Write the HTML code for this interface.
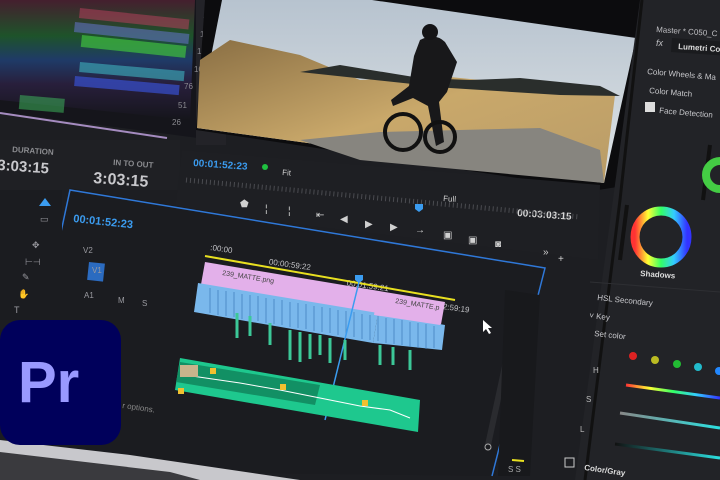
<!DOCTYPE html>
<html><head><meta charset="utf-8"><style>
html,body{margin:0;padding:0;width:720px;height:480px;overflow:hidden;background:#1c1d21}
svg{display:block}
text{font-family:"Liberation Sans",sans-serif}
</style></head><body>
<svg width="720" height="480" viewBox="0 0 720 480" xmlns="http://www.w3.org/2000/svg">
<defs>
<linearGradient id="sky" x1="0" y1="0" x2="0" y2="1"><stop offset="0" stop-color="#b7c3cf"/><stop offset="1" stop-color="#dfe4e6"/></linearGradient>
<linearGradient id="hill" x1="0" y1="0" x2="1" y2="1"><stop offset="0" stop-color="#8a6f44"/><stop offset="0.5" stop-color="#c9a86a"/><stop offset="1" stop-color="#b99c68"/></linearGradient>
<linearGradient id="scope" x1="0" y1="0" x2="0" y2="1"><stop offset="0" stop-color="#4a2030"/><stop offset="0.3" stop-color="#1f5a2c"/><stop offset="0.5" stop-color="#203f70"/><stop offset="0.7" stop-color="#2a203f"/><stop offset="1" stop-color="#15151b"/></linearGradient>
<linearGradient id="hue" x1="0" y1="0" x2="1" y2="0"><stop offset="0" stop-color="#f33"/><stop offset=".25" stop-color="#ff3"/><stop offset=".5" stop-color="#3f6"/><stop offset=".75" stop-color="#3cf"/><stop offset="1" stop-color="#33f"/></linearGradient>
<linearGradient id="sat" x1="0" y1="0" x2="1" y2="0"><stop offset="0" stop-color="#888"/><stop offset="1" stop-color="#2ce0e0"/></linearGradient>
<linearGradient id="lum" x1="0" y1="0" x2="1" y2="0"><stop offset="0" stop-color="#111"/><stop offset="1" stop-color="#2ce0e0"/></linearGradient>
</defs>
<rect width="720" height="480" fill="#1d1e22"/>
<!-- scopes -->
<polygon points="0,0 200,0 198,138 0,112" fill="#15151b"/>
<polygon points="0,0 195,0 190,120 0,100" fill="url(#scope)" opacity="0.9"/>
<rect x="80" y="8" width="110" height="10" fill="#c04060" opacity=".5" transform="rotate(6 80 8)"/>
<rect x="75" y="22" width="115" height="10" fill="#6070c0" opacity=".6" transform="rotate(6 75 22)"/>
<rect x="82" y="35" width="105" height="12" fill="#3fbf3f" opacity=".7" transform="rotate(6 82 35)"/>
<rect x="80" y="62" width="105" height="10" fill="#3aa0b0" opacity=".7" transform="rotate(5 80 62)"/>
<rect x="75" y="76" width="105" height="10" fill="#3850d0" opacity=".7" transform="rotate(5 75 76)"/>
<rect x="20" y="95" width="45" height="14" fill="#3fbf5f" opacity=".5" transform="rotate(5 20 95)"/>
<line x1="0" y1="113" x2="167" y2="138" stroke="#a58cc0" stroke-width="2"/>
<rect x="196" y="0" width="30" height="145" fill="#232328"/>
<g fill="#8a8a90" font-size="8"><text x="203" y="22">179</text><text x="200" y="37">153</text><text x="197" y="54">128</text><text x="194" y="72">102</text><text x="184" y="89">76</text><text x="178" y="108">51</text><text x="172" y="125">26</text></g>
<!-- duration -->
<rect x="0" y="140" width="180" height="50" fill="#1f2024"/>
<text x="12" y="152" fill="#8b8c90" font-size="8" font-weight="bold" transform="rotate(4 12 152)">DURATION</text>
<text x="-3" y="170" fill="#c8c8cc" font-size="15" font-weight="bold" transform="rotate(4 0 170)">3:03:15</text>
<text x="113" y="165" fill="#8b8c90" font-size="8" font-weight="bold" transform="rotate(4 113 165)">IN TO OUT</text>
<text x="93" y="183" fill="#c8c8cc" font-size="16" font-weight="bold" transform="rotate(4 93 183)">3:03:15</text>
<!-- video -->
<polygon points="205,0 660,0 645,40 630,185 598,190 196,130" fill="#0c0c0e"/>
<polygon points="222,0 372,0 636,38 604,183 197,128" fill="url(#sky)"/>
<polygon points="197,128 200,60 230,40 300,55 360,80 440,76 520,84 615,95 604,183" fill="url(#hill)"/>
<polygon points="300,72 340,65 420,78 470,80 520,78 600,86 620,96 560,95 450,88" fill="#2a2e2c"/>
<polygon points="300,140 380,132 540,128 600,150 604,183 360,160" fill="#87857f"/>
<path d="M420,40 q15,-8 25,2 l12,20 l-10,30 l-8,10 l5,40 l-8,4 l-8,-40 l-15,-8 l-20,8 l-2,-6 l18,-14 l5,-30z" fill="#18181a"/>
<circle cx="403" cy="132" r="18" fill="none" stroke="#111" stroke-width="4"/>
<circle cx="440" cy="137" r="15" fill="none" stroke="#111" stroke-width="4"/>
<circle cx="430" cy="32" r="8" fill="#141416"/>
<!-- transport -->
<polygon points="182,150 600,185 598,260 175,210" fill="#1e1f23"/>
<text x="193" y="166" fill="#3b9cf0" font-size="10" font-weight="bold" transform="rotate(4 193 166)">00:01:52:23</text>
<circle cx="265" cy="167" r="3" fill="#1fc040"/>
<text x="282" y="175" fill="#d0d0d0" font-size="8" transform="rotate(4 282 175)">Fit</text>
<text x="443" y="201" fill="#d0d0d0" font-size="8" transform="rotate(4 443 201)">Full</text>
<text x="517" y="216" fill="#d8d8d8" font-size="10" font-weight="bold" transform="rotate(4 517 216)">00:03:03:15</text>
<line x1="186" y1="180" x2="580" y2="217" stroke="#4a4b50" stroke-width="5" stroke-dasharray="1 3"/>
<path d="M415,204 h8 v5 l-4,3 l-4,-3z" fill="#3b9cf0"/>
<g fill="#d0d0d0" font-size="10"><text x="240" y="207">⬟</text><text x="265" y="212">¦</text><text x="288" y="214">¦</text><text x="316" y="218">⇤</text><text x="340" y="222">◀</text><text x="365" y="227">▶</text><text x="390" y="230">▶</text><text x="415" y="233">→</text><text x="443" y="238">▣</text><text x="468" y="243">▣</text><text x="495" y="247">◙</text><text x="543" y="255">»</text><text x="558" y="262">+</text></g>
<!-- timeline panel -->
<polygon points="70,188 545,268 495,476 0,470 0,330 40,320" fill="#1b1c20"/>
<polyline points="40,330 70,190 545,268 492,476" fill="none" stroke="#2f78d8" stroke-width="1.5"/>
<text x="73" y="222" fill="#3b9cf0" font-size="11" font-weight="bold" transform="rotate(6 73 222)">00:01:52:23</text>
<g fill="#c0c0c4" font-size="8" transform="rotate(8 210 250)">
<text x="210" y="250">:00:00</text><text x="270" y="256">00:00:59:22</text><text x="350" y="266">00:01:59:21</text><text x="433" y="276">00:02:59:19</text></g>
<line x1="205" y1="256" x2="455" y2="300" stroke="#e8e020" stroke-width="2"/>
<!-- tool column -->
<rect x="0" y="190" width="62" height="130" fill="#1b1c20"/>
<path d="M45,198 l6,8 h-12z" fill="#3b9cf0"/>
<g fill="#9a9aa0" font-size="9"><text x="40" y="222">▭</text><text x="32" y="248">✥</text><text x="25" y="265">⊢⊣</text><text x="22" y="280">✎</text><text x="18" y="297">✋</text><text x="14" y="313">T</text></g>
<rect x="89" y="262" width="16" height="18" fill="#2b6bc0" transform="rotate(6 89 262)"/>
<g fill="#9a9aa0" font-size="8"><text x="83" y="253">V2</text><text x="92" y="273">V1</text><text x="84" y="298">A1</text><text x="118" y="303">M</text><text x="142" y="306">S</text></g>
<!-- clips -->
<polygon points="205,262 445,302 440,330 200,290" fill="#e3b0ea"/>
<polygon points="198,283 378,313 373,343 194,312" fill="#7ab8ec"/>
<polygon points="378,313 445,325 442,350 373,343" fill="#7ab8ec"/>
<g stroke="#3e7ab8" stroke-width="1" opacity=".7">
<path d="M210,288 v25 M218,290 v25 M226,291 v25 M234,292 v25 M242,294 v25 M250,295 v25 M258,296 v25 M266,298 v25 M274,299 v25 M282,300 v25 M290,302 v25 M298,303 v25 M306,304 v25 M314,306 v25 M322,307 v25 M330,308 v25 M338,310 v25 M346,311 v25 M354,312 v25 M362,314 v25 M370,315 v25 M378,316 v25 M386,318 v25 M394,319 v25 M402,320 v25 M410,322 v25 M418,323 v25 M426,324 v25 M434,326 v22"/></g>
<polygon points="378,292 442,302 440,325 374,315" fill="#e3b0ea"/>
<text x="222" y="275" fill="#444" font-size="7" transform="rotate(9 222 275)">239_MATTE.png</text>
<text x="395" y="303" fill="#444" font-size="7" transform="rotate(9 395 303)">239_MATTE.p</text>
<line x1="360" y1="278" x2="325" y2="420" stroke="#3b9cf0" stroke-width="1.5"/>
<path d="M355,275 h8 v5 l-4,3 l-4,-3z" fill="#3b9cf0"/>
<g stroke="#3cc898" stroke-width="3"><path d="M237,313 v25 M250,316 v20 M270,323 v22 M290,330 v30 M300,332 v30 M310,334 v25 M320,335 v20 M330,338 v25 M345,340 v20 M380,345 v20 M393,347 v18 M410,350 v20"/></g>
<polygon points="180,358 420,400 418,432 175,390" fill="#1ec88e"/>
<polygon points="180,362 320,385 315,405 176,382" fill="#129064"/>
<polyline points="185,375 240,383 280,390 320,398 360,406 390,410 410,418" fill="none" stroke="#fff" stroke-width="1"/>
<rect x="180" y="365" width="18" height="12" fill="#c8b48c"/>
<g fill="#f0c030"><rect x="210" y="368" width="6" height="6"/><rect x="280" y="384" width="6" height="6"/><rect x="362" y="400" width="6" height="6"/><rect x="178" y="388" width="6" height="6"/></g>
<text x="122" y="408" fill="#888" font-size="8" transform="rotate(8 122 408)">r options.</text>
<!-- scrollbars -->
<line x1="515" y1="320" x2="488" y2="445" stroke="#2a2b2f" stroke-width="6"/>
<circle cx="516" cy="320" r="3" fill="none" stroke="#aaa"/><circle cx="508" cy="356" r="3" fill="none" stroke="#aaa"/><circle cx="488" cy="447" r="3" fill="none" stroke="#aaa"/>
<path d="M483,320 v12 l3,-3 l3,5 l2,-1 l-3,-5 h4z" fill="#fff"/>
<!-- meter column -->
<polygon points="505,290 540,295 530,476 498,476" fill="#18191c"/>
<line x1="512" y1="460" x2="524" y2="461" stroke="#e8e020" stroke-width="2"/>
<text x="508" y="472" fill="#aaa" font-size="8">S S</text>
<!-- right panel -->
<polygon points="640,0 720,0 720,480 575,480" fill="#222327"/>
<polyline points="642,0 620,200 585,480" stroke="#111" stroke-width="3" fill="none"/>
<text x="656" y="32" fill="#c0c0c4" font-size="8" transform="rotate(4 656 32)">Master * C050_C</text>
<text x="656" y="46" fill="#c0c0c4" font-size="9" font-style="italic">fx</text>
<rect x="672" y="38" width="60" height="14" fill="#1a1b1e" transform="rotate(4 672 38)"/>
<text x="678" y="49" fill="#ddd" font-size="8" font-weight="bold" transform="rotate(4 678 49)">Lumetri Co</text>
<text x="647" y="74" fill="#c8c8cc" font-size="8" transform="rotate(5 647 74)">Color Wheels &amp; Ma</text>
<text x="649" y="93" fill="#c8c8cc" font-size="8" transform="rotate(5 649 93)">Color Match</text>
<rect x="645" y="102" width="10" height="10" fill="#ddd"/>
<text x="659" y="113" fill="#c8c8cc" font-size="8" transform="rotate(5 659 113)">Face Detection</text>
<line x1="710" y1="145" x2="703" y2="200" stroke="#111" stroke-width="4"/>
<line x1="627" y1="205" x2="620" y2="260" stroke="#111" stroke-width="4"/>
<circle cx="720" cy="175" r="14" fill="none" stroke="#4c4" stroke-width="8"/>
<circle cx="661" cy="237" r="26" fill="none" stroke="url(#hue)" stroke-width="9"/>
<text x="640" y="276" fill="#ddd" font-size="8" font-weight="bold" transform="rotate(4 640 276)">Shadows</text>
<line x1="590" y1="282" x2="720" y2="292" stroke="#2e2f33"/>
<text x="597" y="300" fill="#c8c8cc" font-size="8" transform="rotate(6 597 300)">HSL Secondary</text>
<text x="589" y="318" fill="#c8c8cc" font-size="8" transform="rotate(6 589 318)">˅ Key</text>
<text x="594" y="336" fill="#c8c8cc" font-size="8" transform="rotate(6 594 336)">Set color</text>
<circle cx="633" cy="356" r="4" fill="#d22"/><circle cx="655" cy="360" r="4" fill="#bb2"/><circle cx="677" cy="364" r="4" fill="#2b3"/><circle cx="698" cy="367" r="4" fill="#2bc"/><circle cx="719" cy="371" r="4" fill="#28f"/>
<text x="593" y="373" fill="#bbb" font-size="8">H</text><text x="586" y="402" fill="#bbb" font-size="8">S</text><text x="580" y="432" fill="#bbb" font-size="8">L</text>
<line x1="626" y1="385" x2="720" y2="398" stroke="url(#hue)" stroke-width="3"/>
<line x1="620" y1="413" x2="720" y2="428" stroke="url(#sat)" stroke-width="3"/>
<line x1="615" y1="444" x2="720" y2="458" stroke="url(#lum)" stroke-width="3"/>
<rect x="565" y="458" width="9" height="9" fill="none" stroke="#ccc"/>
<text x="584" y="470" fill="#ddd" font-size="8" font-weight="bold" transform="rotate(8 584 470)">Color/Gray</text>
<!-- laptop bezel bottom left -->
<polygon points="0,440 130,455 300,480 0,480" fill="#c8c8cc"/>
<polygon points="0,452 170,472 200,480 0,480" fill="#3a3a3e"/>
<!-- Pr logo -->
<rect x="0" y="320" width="121" height="125" rx="20" fill="#00005b"/>
<text x="18" y="402" fill="#9999ff" font-size="58" font-weight="bold">Pr</text>
</svg>
</body></html>
